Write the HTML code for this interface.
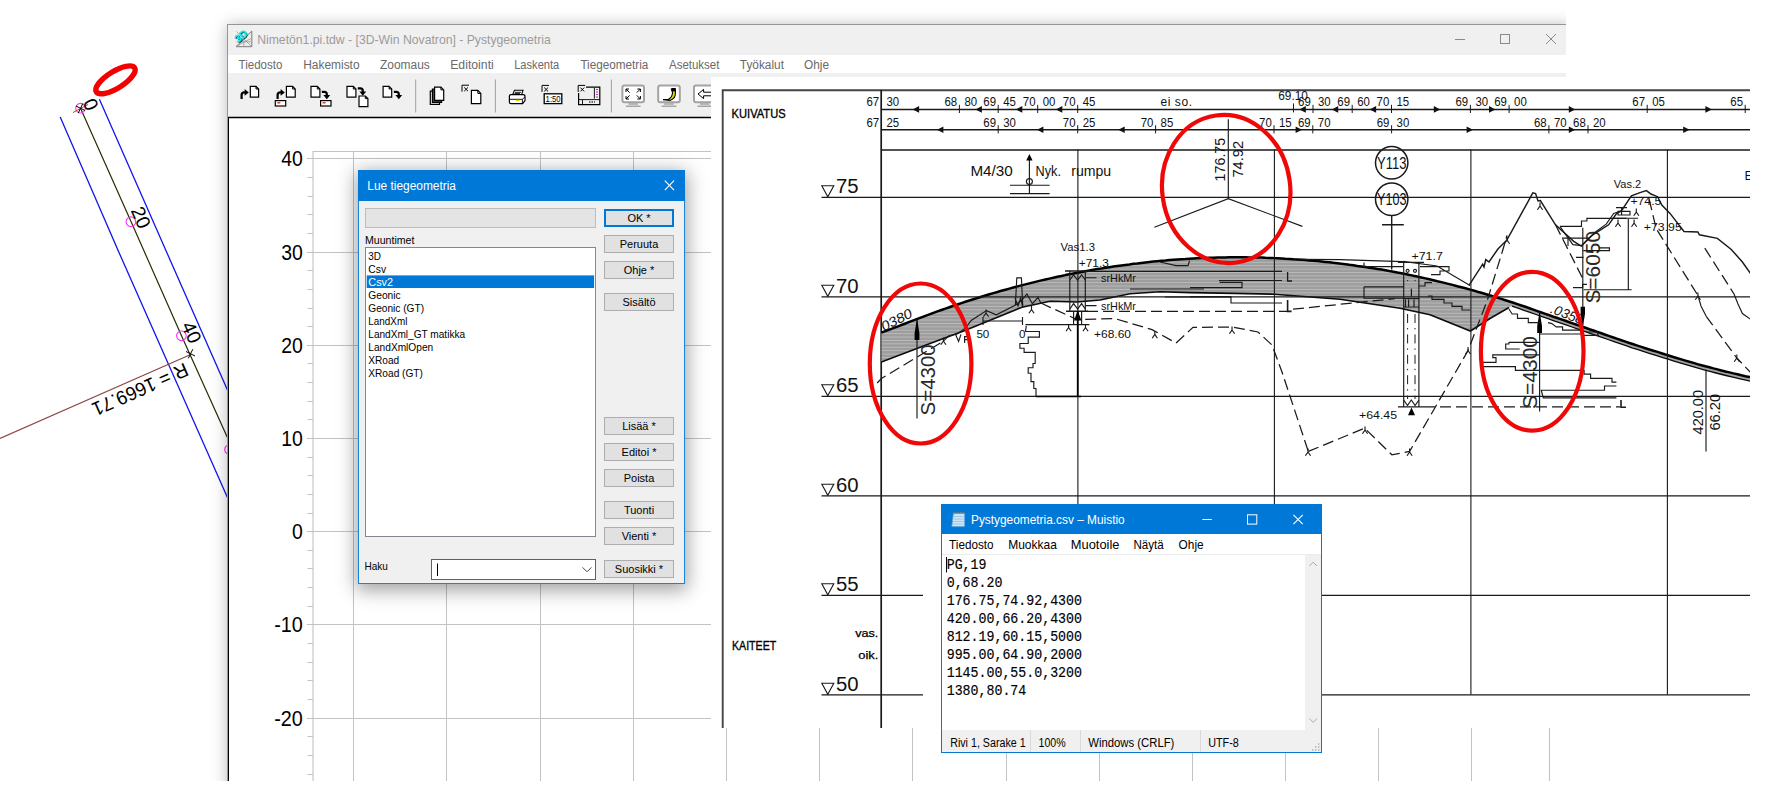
<!DOCTYPE html>
<html lang="fi"><head><meta charset="utf-8"><title>Pystygeometria</title>
<style>
html,body{margin:0;padding:0;background:#fff;}
body{width:1771px;height:791px;position:relative;overflow:hidden;font-family:"Liberation Sans",sans-serif;}
.abs{position:absolute;}
svg{position:absolute;left:0;top:0;overflow:visible;}
svg text{font-family:"Liberation Sans",sans-serif;}
/* main window */
#mainclip{position:absolute;left:0;top:0;width:1566px;height:781px;overflow:hidden;}
#mainwin{position:absolute;left:227px;top:24px;width:1345px;height:780px;background:#fff;border:1px solid #969696;box-sizing:border-box;box-shadow:0 1px 15px 0 rgba(0,0,0,.27);}
#mtitle{position:absolute;left:0;top:0;width:100%;height:30px;background:#f0f0f0;}
#mtitle .t{position:absolute;left:29px;top:0;line-height:30px;font-size:12.4px;color:#9a9a9a;white-space:nowrap;}
#mmenu{position:absolute;left:0;top:30px;width:100%;height:18px;background:#fff;}
#mmenu span{position:absolute;top:0;line-height:19px;font-size:12.3px;color:#686868;white-space:nowrap;}
#mtool{position:absolute;left:0;top:48px;width:100%;height:44px;background:#f0f0f0;}
#mclient{position:absolute;left:0;top:92px;width:100%;height:700px;background:#fff;border-left:1px solid #000;box-sizing:border-box;}
.ylab{position:absolute;width:60px;text-align:right;font-size:20.5px;line-height:24px;color:#000;}
/* dialog */
#dlg{position:absolute;left:358px;top:170px;width:327px;height:414px;background:#f0f0f0;border:1px solid #1883d7;box-sizing:border-box;box-shadow:0 4px 18px 2px rgba(0,0,0,.38);font-size:11px;color:#000;}
#dlg .title{position:absolute;left:0;top:0;width:100%;height:30px;background:#0078d7;color:#fff;font-size:12.2px;line-height:29px;}
#dlg .btn{position:absolute;left:245px;width:70px;height:18px;box-sizing:border-box;border:1px solid #adadad;background:#e1e1e1;text-align:center;line-height:16px;font-size:11px;white-space:nowrap;}
#dlg .list{position:absolute;left:6px;top:76px;width:231px;height:290px;box-sizing:border-box;border:1px solid #828790;background:#fff;}
#dlg .list div{position:absolute;left:1px;width:227px;height:13px;line-height:13px;padding-left:2px;box-sizing:border-box;font-size:10.6px;white-space:nowrap;}
/* notepad */
#np{position:absolute;left:941px;top:504px;width:381px;height:249px;background:#fff;border:1px solid #0078d7;box-sizing:border-box;}
#np .title{position:absolute;left:0;top:0;width:100%;height:29px;background:#0078d7;color:#fff;font-size:12.2px;line-height:29px;}
#np .menu span{position:absolute;top:30px;line-height:20px;font-size:12.2px;color:#000;white-space:nowrap;}
#np .txt{position:absolute;left:5px;top:50px;font-family:"Liberation Mono",monospace;font-size:13.27px;line-height:18.08px;white-space:pre;color:#000;transform-origin:0 0;}
#np .status{position:absolute;left:0;top:225px;width:100%;height:22px;background:#f0f0f0;font-size:12px;}
#np .status span{position:absolute;top:0;line-height:23px;white-space:nowrap;}
#np .status i{position:absolute;top:0;width:1px;height:22px;background:#d7d7d7;}

</style></head>
<body>
<svg id="leftsvg" width="1771" height="791" viewBox="0 0 1771 791">
<g fill="none" stroke-linecap="butt">
<path d="M99.4 99.3 L165.7 250 L229 393.5" stroke="#1414f0" stroke-width="1.3"/>
<path d="M60.2 117 L117.9 250 L229 501" stroke="#1414f0" stroke-width="1.3"/>
<path d="M80.5 108.2 L131 221.5 L181.4 335.5 L229 441" stroke="#2b2b00" stroke-width="1.2"/>
<path d="M0 438.4 L189.6 355" stroke="#8c4646" stroke-width="1.1"/>
<circle cx="80.5" cy="108.2" r="4.8" stroke="#ff2cff" stroke-width="1.1"/>
<circle cx="130.9" cy="221.7" r="4.8" stroke="#ff2cff" stroke-width="1.1"/>
<circle cx="181.4" cy="335.8" r="4.8" stroke="#ff2cff" stroke-width="1.1"/>
<circle cx="229.5" cy="449.5" r="4.8" stroke="#ff2cff" stroke-width="1.1"/>
<path d="M73 112.5 L88 104.5" stroke="#ff2020" stroke-width="1"/>
<path d="M76 106 L85 110.5 M82.8 103.5 L78.3 113" stroke="#000" stroke-width="1"/>
<path d="M186 351.5 L195 356 M192.8 349.2 L188.3 358.4" stroke="#000" stroke-width="1"/>
<ellipse cx="115.5" cy="79.8" rx="22.6" ry="8.4" transform="rotate(-32 115.5 79.8)" stroke="#f40000" stroke-width="5.4"/>
</g>
<g font-size="19.4px" fill="#000" text-anchor="middle">
<text transform="translate(91 104.4) rotate(66)" y="6.9">0</text>
<text transform="translate(141.1 217.4) rotate(66)" y="6.9">20</text>
<text transform="translate(191.7 332.2) rotate(66)" y="6.9">40</text>
<text transform="translate(140.2 389.6) rotate(156.2)" y="6.8" font-size="19.4px" textLength="103" lengthAdjust="spacingAndGlyphs">R = 1669.71</text>
</g>
</svg>
<div id="mainclip"><div id="mainwin">
<div id="mtitle"></div><div id="mmenu"></div><div id="mtool"></div><div id="mclient"></div>
</div>
<svg width="1566" height="781" viewBox="0 0 1566 781">
<path d="M313 151 V781 M312.5 151.5 H1549.5 V781" fill="none" stroke="#c3c3c3" stroke-width="1.1"/><path d="M353.5 151.5 V781 M446.5 151.5 V781 M540.5 151.5 V781 M633.5 151.5 V781 M726.5 151.5 V781 M819.5 151.5 V781 M912.5 151.5 V781 M1006.5 151.5 V781 M1099.5 151.5 V781 M1192.5 151.5 V781 M1285.5 151.5 V781 M1378.5 151.5 V781 M1471.5 151.5 V781 M306.8 158.5 H1549 M306.8 252.5 H1549 M306.8 345.5 H1549 M306.8 438.5 H1549 M306.8 531.5 H1549 M306.8 624.5 H1549 M306.8 718.5 H1549 " fill="none" stroke="#c3c3c3" stroke-width="1"/><path d="M307.4 177.5 H313 M307.4 196.5 H313 M307.4 214.5 H313 M307.4 233.5 H313 M307.4 270.5 H313 M307.4 289.5 H313 M307.4 308.5 H313 M307.4 326.5 H313 M307.4 363.5 H313 M307.4 382.5 H313 M307.4 401.5 H313 M307.4 419.5 H313 M307.4 457.5 H313 M307.4 475.5 H313 M307.4 494.5 H313 M307.4 513.5 H313 M307.4 550.5 H313 M307.4 568.5 H313 M307.4 587.5 H313 M307.4 606.5 H313 M307.4 643.5 H313 M307.4 662.5 H313 M307.4 680.5 H313 M307.4 699.5 H313 M307.4 736.5 H313 M307.4 755.5 H313 M307.4 774.5 H313 " fill="none" stroke="#c3c3c3" stroke-width="1"/><text x="281.2" y="166.4" textLength="21.6" lengthAdjust="spacingAndGlyphs" font-size="21.2px" fill="#000">40</text><text x="281.2" y="259.6" textLength="21.6" lengthAdjust="spacingAndGlyphs" font-size="21.2px" fill="#000">30</text><text x="281.2" y="352.8" textLength="21.6" lengthAdjust="spacingAndGlyphs" font-size="21.2px" fill="#000">20</text><text x="281.2" y="446.0" textLength="21.6" lengthAdjust="spacingAndGlyphs" font-size="21.2px" fill="#000">10</text><text x="292.0" y="539.2" textLength="10.8" lengthAdjust="spacingAndGlyphs" font-size="21.2px" fill="#000">0</text><text x="274.2" y="632.4" textLength="28.6" lengthAdjust="spacingAndGlyphs" font-size="21.2px" fill="#000">-10</text><text x="274.2" y="725.6" textLength="28.6" lengthAdjust="spacingAndGlyphs" font-size="21.2px" fill="#000">-20</text>
<path d="M228 117.4 H1566" stroke="#000" stroke-width="1.5"/><g><path d="M236 46.7 L251.8 31 V46.7 Z" fill="#ececec" stroke="#7a7a7a" stroke-width="1"/><path d="M237.6 45.4 L251 38.6 M238.4 46.4 L245.6 32.6 M236.6 41.8 H251.4 M243.8 36.2 V46.4 M236.4 31.4 L251.6 46.6" stroke="#9a9a9a" stroke-width="0.8"/><text transform="translate(241.9 36.9) rotate(-38)" text-anchor="middle" y="3.4" font-size="10px" font-weight="bold" fill="#000">3D</text><text transform="translate(241.2 36.2) rotate(-38)" text-anchor="middle" y="3.4" font-size="10.6px" font-weight="bold" fill="#10e6ee" stroke="#10e6ee" stroke-width="0.4">3D</text></g><text x="257.2" y="44.2" textLength="293.6" lengthAdjust="spacingAndGlyphs" font-size="12.4px" fill="#9b9b9b" >Nimetön1.pi.tdw - [3D-Win Novatron] - Pystygeometria</text><path d="M1455 39.5 H1465" stroke="#8a8a8a" stroke-width="1"/><rect x="1500.5" y="34.5" width="9" height="9" fill="none" stroke="#8a8a8a" stroke-width="1"/><path d="M1546 34 L1556 44 M1556 34 L1546 44" stroke="#8a8a8a" stroke-width="1"/>
<text x="238.6" y="69" textLength="43.8" lengthAdjust="spacingAndGlyphs" font-size="12.3px" fill="#6a6a6a" >Tiedosto</text><text x="303.2" y="69" textLength="56.4" lengthAdjust="spacingAndGlyphs" font-size="12.3px" fill="#6a6a6a" >Hakemisto</text><text x="380" y="69" textLength="49.8" lengthAdjust="spacingAndGlyphs" font-size="12.3px" fill="#6a6a6a" >Zoomaus</text><text x="450.2" y="69" textLength="43.6" lengthAdjust="spacingAndGlyphs" font-size="12.3px" fill="#6a6a6a" >Editointi</text><text x="514.2" y="69" textLength="45.1" lengthAdjust="spacingAndGlyphs" font-size="12.3px" fill="#6a6a6a" >Laskenta</text><text x="580.4" y="69" textLength="68.0" lengthAdjust="spacingAndGlyphs" font-size="12.3px" fill="#6a6a6a" >Tiegeometria</text><text x="669" y="69" textLength="50.4" lengthAdjust="spacingAndGlyphs" font-size="12.3px" fill="#6a6a6a" >Asetukset</text><text x="739.8" y="69" textLength="44.2" lengthAdjust="spacingAndGlyphs" font-size="12.3px" fill="#6a6a6a" >Työkalut</text><text x="804" y="69" textLength="25" lengthAdjust="spacingAndGlyphs" font-size="12.3px" fill="#6a6a6a" >Ohje</text>
<path d="M415.7 79.5 V112.5" stroke="#a0a0a0" stroke-width="1"/><path d="M495.4 79.5 V112.5" stroke="#a0a0a0" stroke-width="1"/><path d="M611.4 79.5 V112.5" stroke="#a0a0a0" stroke-width="1"/><path d="M241.6 98.9 V94.9 Q241.6 92.4 244.6 92.4 H245.6" fill="none" stroke="#000" stroke-width="2.2"/><path d="M244.6 89.0 L248.79999999999998 92.4 L244.6 95.80000000000001 Z" fill="#000"/><path d="M250.3 86.4 H256.0 L258.6 89.0 V97.10000000000001 H250.3 Z" fill="#fff" stroke="#000" stroke-width="1.2"/><path d="M256.0 86.4 V89.0 H258.6" fill="none" stroke="#000" stroke-width="1"/><path d="M277.6 98.9 V94.9 Q277.6 92.4 280.6 92.4 H281.6" fill="none" stroke="#000" stroke-width="2.2"/><path d="M280.6 89.0 L284.8 92.4 L280.6 95.80000000000001 Z" fill="#000"/><path d="M286.4 86.4 H292.59999999999997 L295.2 89.0 V97.10000000000001 H286.4 Z" fill="#fff" stroke="#000" stroke-width="1.2"/><path d="M292.59999999999997 86.4 V89.0 H295.2" fill="none" stroke="#000" stroke-width="1"/><rect x="275.3" y="100.6" width="10.4" height="5.4" fill="#fff" stroke="#000" stroke-width="1.2"/><path d="M277.3 102.8 H280.3" stroke="#e00000" stroke-width="1.2"/><path d="M311 86.4 H317.29999999999995 L319.9 89.0 V97.10000000000001 H311 Z" fill="#fff" stroke="#000" stroke-width="1.2"/><path d="M317.29999999999995 86.4 V89.0 H319.9" fill="none" stroke="#000" stroke-width="1"/><path d="M321.8 91.8 H324.3 Q326.8 91.8 326.8 94.3 V95.8" fill="none" stroke="#000" stroke-width="2.2"/><path d="M323.40000000000003 95.0 L326.8 99.2 L330.2 95.0 Z" fill="#000"/><rect x="320.6" y="100.6" width="10.4" height="5.4" fill="#fff" stroke="#000" stroke-width="1.2"/><path d="M322.6 102.8 H325.6" stroke="#e00000" stroke-width="1.2"/><path d="M347 86.4 H353.29999999999995 L355.9 89.0 V97.10000000000001 H347 Z" fill="#fff" stroke="#000" stroke-width="1.2"/><path d="M353.29999999999995 86.4 V89.0 H355.9" fill="none" stroke="#000" stroke-width="1"/><path d="M357.8 88.4 H360.3 Q362.8 88.4 362.8 90.9 V92.4" fill="none" stroke="#000" stroke-width="2.2"/><path d="M359.40000000000003 91.60000000000001 L362.8 95.80000000000001 L366.2 91.60000000000001 Z" fill="#000"/><path d="M359 96 H365.29999999999995 L367.9 98.6 V106.6 H359 Z" fill="#fff" stroke="#000" stroke-width="1.2"/><path d="M365.29999999999995 96 V98.6 H367.9" fill="none" stroke="#000" stroke-width="1"/><path d="M383.1 86.4 H389.1 L391.70000000000005 89.0 V97.10000000000001 H383.1 Z" fill="#fff" stroke="#000" stroke-width="1.2"/><path d="M389.1 86.4 V89.0 H391.70000000000005" fill="none" stroke="#000" stroke-width="1"/><path d="M393.8 91.8 H396.3 Q398.8 91.8 398.8 94.3 V95.8" fill="none" stroke="#000" stroke-width="2.2"/><path d="M395.40000000000003 95.0 L398.8 99.2 L402.2 95.0 Z" fill="#000"/><path d="M430.3 91.2 H436.7 L439.5 94.0 V104.4 H430.3 Z" fill="#fff" stroke="#000" stroke-width="1.2"/><path d="M436.7 91.2 V94.0 H439.5" fill="none" stroke="#000" stroke-width="1"/><path d="M432.4 89.2 H438.79999999999995 L441.59999999999997 92.0 V102.4 H432.4 Z" fill="#f00000" stroke="#000" stroke-width="1.2"/><path d="M438.79999999999995 89.2 V92.0 H441.59999999999997" fill="none" stroke="#000" stroke-width="1"/><path d="M434.6 87.1 H440.90000000000003 L443.70000000000005 89.89999999999999 V100.39999999999999 H434.6 Z" fill="#fff" stroke="#000" stroke-width="1.2"/><path d="M440.90000000000003 87.1 V89.89999999999999 H443.70000000000005" fill="none" stroke="#000" stroke-width="1"/><path d="M462 91.7 V85.2 H469" fill="none" stroke="#000" stroke-width="1"/><path d="M464.2 87.4 L468 91.2 M468 87.4 L464.2 91.2" stroke="#000" stroke-width="1"/><path d="M471.4 90.4 H477.79999999999995 L480.79999999999995 93.4 V103.60000000000001 H471.4 Z" fill="#fff" stroke="#000" stroke-width="1.2"/><path d="M477.79999999999995 90.4 V93.4 H480.79999999999995" fill="none" stroke="#000" stroke-width="1"/><path d="M512.5 95 L514.5 90.3 H523 L521.5 95 Z" fill="#fff" stroke="#000" stroke-width="1.1"/><path d="M509.4 96 Q509.4 94.6 511 94.6 H523 Q525 94.6 525 96.4 V100.5 L522.6 103.6 H511 Q509.4 103.6 509.4 102 Z" fill="#fff" stroke="#000" stroke-width="1.2"/><path d="M510 99.3 H522.4 L524.8 97 M522.4 99.3 V103.4 M515 92.3 H521 M514.4 93.6 H520" fill="none" stroke="#000" stroke-width="0.9"/><path d="M516 100.4 H519.5" stroke="#e0d000" stroke-width="1.2"/><path d="M542 91.9 V85.4 H549" fill="none" stroke="#000" stroke-width="1"/><path d="M544.2 87.60000000000001 L548 91.4 M548 87.60000000000001 L544.2 91.4" stroke="#000" stroke-width="1"/><rect x="544.2" y="93.8" width="17.6" height="9.8" fill="#fff" stroke="#000" stroke-width="1.3"/><text x="545.6" y="102.2" font-size="8.6px" textLength="15" lengthAdjust="spacingAndGlyphs" fill="#000">1:50</text><path d="M586 87.2 H599.8 V104.6 H578.6 V93" fill="none" stroke="#000" stroke-width="1.2"/><path d="M578.2 91.9 V85.4 H585.2" fill="none" stroke="#000" stroke-width="1"/><path d="M580.4000000000001 87.60000000000001 L584.2 91.4 M584.2 87.60000000000001 L580.4000000000001 91.4" stroke="#000" stroke-width="1"/><path d="M594.4 88 V98.6 M582.5 99.6 V104.4 M578.8 99.6 H599.6" stroke="#000" stroke-width="0.9" fill="none"/><path d="M596 89.5 h2 M596 92 h2 M596 94.5 h2 M596 97 h2" stroke="#c030c0" stroke-width="1"/><path d="M589 102 h6" stroke="#444" stroke-width="1.6" stroke-dasharray="1.5 1"/><rect x="622.4" y="85.6" width="21.6" height="16.6" rx="2" fill="#fff" stroke="#a3a3a3" stroke-width="2"/><path d="M628.4 104 H638.0 M625.8 106.2 H640.6" stroke="#a6a6a6" stroke-width="1.5"/><path d="M626 89 l3.6 3.6 M626 89 h3 M626 89 v3 M640.4 89 l-3.6 3.6 M640.4 89 h-3 M640.4 89 v3 M626 99 l3.6 -3.6 M626 99 h3 M626 99 v-3 M640.4 99 l-3.6 -3.6 M640.4 99 h-3 M640.4 99 v-3" stroke="#000" stroke-width="1" fill="none"/><rect x="658.2" y="85.6" width="21.6" height="16.6" rx="2" fill="#fff" stroke="#a3a3a3" stroke-width="2"/><path d="M664.2 104 H673.8000000000001 M661.6 106.2 H676.4000000000001" stroke="#a6a6a6" stroke-width="1.5"/><path d="M663 99.6 H668 Q672 98 672.6 92.6 L671.4 89 H675.4 V92 Q676 98.4 670 100.4 Z" fill="#e8e000" stroke="#000" stroke-width="1.1"/><rect x="671.6" y="88" width="4" height="3.4" fill="#000"/><rect x="694" y="85.6" width="21.6" height="16.6" rx="2" fill="#fff" stroke="#a3a3a3" stroke-width="2"/><path d="M700 104 H709.6 M697.4 106.2 H712.2" stroke="#a6a6a6" stroke-width="1.5"/><path d="M698 94 L703.6 89.4 V92.2 H711 M698 94 L703.6 98.6 V95.8 H711" fill="#fff" stroke="#000" stroke-width="1"/>
</svg>
</div>
<div id="dlg"></div>
<svg width="1771" height="791" viewBox="0 0 1771 791"><rect x="358" y="170" width="327" height="31" fill="#0078d7"/><text x="367.3" y="190" textLength="88.7" lengthAdjust="spacingAndGlyphs" font-size="12.3px" fill="#fff" >Lue tiegeometria</text><path d="M664.8 180.6 L674 190.2 M674 180.6 L664.8 190.2" stroke="#fff" stroke-width="1.1"/><rect x="365.5" y="208.5" width="230" height="19" fill="#e4e4e4" stroke="#bdbdbd" stroke-width="1"/><text x="365" y="244.4" textLength="49.4" lengthAdjust="spacingAndGlyphs" font-size="11px" fill="#000" >Muuntimet</text><rect x="365.5" y="247.5" width="230" height="289" fill="#fff" stroke="#828790" stroke-width="1"/><rect x="366.7" y="275.4" width="227.4" height="12.6" fill="#0078d7"/><text x="368.3" y="260.1" textLength="12.7" lengthAdjust="spacingAndGlyphs" font-size="10.8px" fill="#000" >3D</text><text x="368.3" y="273.1" textLength="17.8" lengthAdjust="spacingAndGlyphs" font-size="10.8px" fill="#000" >Csv</text><text x="368.3" y="286.1" textLength="24.8" lengthAdjust="spacingAndGlyphs" font-size="10.8px" fill="#fff" >Csv2</text><text x="368.3" y="299.2" textLength="32.4" lengthAdjust="spacingAndGlyphs" font-size="10.8px" fill="#000" >Geonic</text><text x="368.3" y="312.2" textLength="55.8" lengthAdjust="spacingAndGlyphs" font-size="10.8px" fill="#000" >Geonic (GT)</text><text x="368.3" y="325.2" textLength="39.1" lengthAdjust="spacingAndGlyphs" font-size="10.8px" fill="#000" >LandXml</text><text x="368.3" y="338.2" textLength="96.8" lengthAdjust="spacingAndGlyphs" font-size="10.8px" fill="#000" >LandXml_GT matikka</text><text x="368.3" y="351.2" textLength="64.9" lengthAdjust="spacingAndGlyphs" font-size="10.8px" fill="#000" >LandXmlOpen</text><text x="368.3" y="364.3" textLength="30.9" lengthAdjust="spacingAndGlyphs" font-size="10.8px" fill="#000" >XRoad</text><text x="368.3" y="377.3" textLength="54.6" lengthAdjust="spacingAndGlyphs" font-size="10.8px" fill="#000" >XRoad (GT)</text><rect x="605" y="210" width="68" height="16" fill="#e1e1e1" stroke="#0078d7" stroke-width="2"/><text x="639" y="222" text-anchor="middle" font-size="11px" fill="#000">OK *</text><rect x="604.5" y="235.5" width="69.0" height="17.0" fill="#e1e1e1" stroke="#adadad" stroke-width="1"/><text x="639" y="248" text-anchor="middle" font-size="11px" fill="#000">Peruuta</text><rect x="604.5" y="261.5" width="69.0" height="17.0" fill="#e1e1e1" stroke="#adadad" stroke-width="1"/><text x="639" y="274" text-anchor="middle" font-size="11px" fill="#000">Ohje *</text><rect x="604.5" y="293.5" width="69.0" height="17.0" fill="#e1e1e1" stroke="#adadad" stroke-width="1"/><text x="639" y="306" text-anchor="middle" font-size="11px" fill="#000">Sisältö</text><rect x="604.5" y="417.5" width="69.0" height="17.0" fill="#e1e1e1" stroke="#adadad" stroke-width="1"/><text x="639" y="430" text-anchor="middle" font-size="11px" fill="#000">Lisää *</text><rect x="604.5" y="443.5" width="69.0" height="17.0" fill="#e1e1e1" stroke="#adadad" stroke-width="1"/><text x="639" y="456" text-anchor="middle" font-size="11px" fill="#000">Editoi *</text><rect x="604.5" y="469.5" width="69.0" height="17.0" fill="#e1e1e1" stroke="#adadad" stroke-width="1"/><text x="639" y="482" text-anchor="middle" font-size="11px" fill="#000">Poista</text><rect x="604.5" y="501.5" width="69.0" height="17.0" fill="#e1e1e1" stroke="#adadad" stroke-width="1"/><text x="639" y="514" text-anchor="middle" font-size="11px" fill="#000">Tuonti</text><rect x="604.5" y="527.5" width="69.0" height="17.0" fill="#e1e1e1" stroke="#adadad" stroke-width="1"/><text x="639" y="540" text-anchor="middle" font-size="11px" fill="#000">Vienti *</text><rect x="604.5" y="560.5" width="69.0" height="17.0" fill="#e1e1e1" stroke="#adadad" stroke-width="1"/><text x="639" y="573" text-anchor="middle" font-size="11px" fill="#000">Suosikki *</text><text x="364.5" y="569.6" textLength="23.4" lengthAdjust="spacingAndGlyphs" font-size="11px" fill="#000" >Haku</text><rect x="431.5" y="559.5" width="164" height="20" fill="#fff" stroke="#0078d7" stroke-width="1"/><path d="M437.5 563.5 V576" stroke="#000" stroke-width="1"/><path d="M582.6 567.4 L587 571.8 L591.4 567.4" fill="none" stroke="#444" stroke-width="1"/></svg>
<svg width="1771" height="791" viewBox="0 0 1771 791"><defs><clipPath id="dc"><rect x="711" y="77" width="1039" height="651"/></clipPath><pattern id="hat" width="6" height="3.4" patternUnits="userSpaceOnUse"><rect width="6" height="3.4" fill="#9d9d9d"/><rect y="0" width="6" height="0.9" fill="#bcbcbc"/></pattern></defs><rect x="711" y="77" width="1039" height="651" fill="#fff"/><g clip-path="url(#dc)"><path d="M722.7 728 V90.2 H1750" fill="none" stroke="#444" stroke-width="1.9"/><path d="M881.2 90 V728" stroke="#1a1a1a" stroke-width="1.7"/><path d="M881.4 109.6 H1750 M881.4 129.8 H1750 M881.4 149.9 H1750" stroke="#1a1a1a" stroke-width="1.5" fill="none"/><path d="M821.8 185.8 H833.8 L827.8 196.8 Z" fill="none" stroke="#1a1a1a" stroke-width="1.1"/><text x="836" y="193.0" font-size="20px" textLength="22.6" lengthAdjust="spacingAndGlyphs" fill="#111">75</text><path d="M821.8 285.3 H833.8 L827.8 296.3 Z" fill="none" stroke="#1a1a1a" stroke-width="1.1"/><text x="836" y="292.5" font-size="20px" textLength="22.6" lengthAdjust="spacingAndGlyphs" fill="#111">70</text><path d="M821.8 384.8 H833.8 L827.8 395.8 Z" fill="none" stroke="#1a1a1a" stroke-width="1.1"/><text x="836" y="392.0" font-size="20px" textLength="22.6" lengthAdjust="spacingAndGlyphs" fill="#111">65</text><path d="M821.8 484.3 H833.8 L827.8 495.3 Z" fill="none" stroke="#1a1a1a" stroke-width="1.1"/><text x="836" y="491.5" font-size="20px" textLength="22.6" lengthAdjust="spacingAndGlyphs" fill="#111">60</text><path d="M821.8 583.8 H833.8 L827.8 594.8 Z" fill="none" stroke="#1a1a1a" stroke-width="1.1"/><text x="836" y="591.0" font-size="20px" textLength="22.6" lengthAdjust="spacingAndGlyphs" fill="#111">55</text><path d="M821.8 683.3 H833.8 L827.8 694.3 Z" fill="none" stroke="#1a1a1a" stroke-width="1.1"/><text x="836" y="690.5" font-size="20px" textLength="22.6" lengthAdjust="spacingAndGlyphs" fill="#111">50</text><text x="731.6" y="117.8" font-size="12.6px" textLength="54" lengthAdjust="spacingAndGlyphs" fill="#000" stroke="#000" stroke-width="0.35">KUIVATUS</text><text x="732" y="649.8" font-size="12.6px" textLength="44.2" lengthAdjust="spacingAndGlyphs" fill="#000" stroke="#000" stroke-width="0.35">KAITEET</text><text x="855.2" y="637.4" font-size="11.4px" textLength="23.2" lengthAdjust="spacingAndGlyphs" fill="#000" stroke="#000" stroke-width="0.25">vas.</text><text x="858.2" y="658.6" font-size="11.4px" textLength="20.2" lengthAdjust="spacingAndGlyphs" fill="#000" stroke="#000" stroke-width="0.25">oik.</text><text x="866.5" y="106.10000000000001" textLength="12.7" lengthAdjust="spacingAndGlyphs" font-size="12.4px" fill="#111">67</text><text x="886.4" y="106.10000000000001" textLength="12.7" lengthAdjust="spacingAndGlyphs" font-size="12.4px" fill="#111">30</text><path d="M959.4 104.80000000000001 V113.0" stroke="#1a1a1a" stroke-width="1"/><text x="944.5" y="106.10000000000001" textLength="12.7" lengthAdjust="spacingAndGlyphs" font-size="12.4px" fill="#111">68</text><text x="964.4" y="106.10000000000001" textLength="12.7" lengthAdjust="spacingAndGlyphs" font-size="12.4px" fill="#111">80</text><path d="M998.2 104.80000000000001 V113.0" stroke="#1a1a1a" stroke-width="1"/><text x="983.3" y="106.10000000000001" textLength="12.7" lengthAdjust="spacingAndGlyphs" font-size="12.4px" fill="#111">69</text><text x="1003.2" y="106.10000000000001" textLength="12.7" lengthAdjust="spacingAndGlyphs" font-size="12.4px" fill="#111">45</text><path d="M1037.7 104.80000000000001 V113.0" stroke="#1a1a1a" stroke-width="1"/><text x="1022.8" y="106.10000000000001" textLength="12.7" lengthAdjust="spacingAndGlyphs" font-size="12.4px" fill="#111">70</text><text x="1042.7" y="106.10000000000001" textLength="12.7" lengthAdjust="spacingAndGlyphs" font-size="12.4px" fill="#111">00</text><path d="M1077.7 104.80000000000001 V113.0" stroke="#1a1a1a" stroke-width="1"/><text x="1062.8" y="106.10000000000001" textLength="12.7" lengthAdjust="spacingAndGlyphs" font-size="12.4px" fill="#111">70</text><text x="1082.7" y="106.10000000000001" textLength="12.7" lengthAdjust="spacingAndGlyphs" font-size="12.4px" fill="#111">45</text><path d="M1313 104.80000000000001 V113.0" stroke="#1a1a1a" stroke-width="1"/><text x="1298.1" y="106.10000000000001" textLength="12.7" lengthAdjust="spacingAndGlyphs" font-size="12.4px" fill="#111">69</text><text x="1318" y="106.10000000000001" textLength="12.7" lengthAdjust="spacingAndGlyphs" font-size="12.4px" fill="#111">30</text><path d="M1352.2 104.80000000000001 V113.0" stroke="#1a1a1a" stroke-width="1"/><text x="1337.3" y="106.10000000000001" textLength="12.7" lengthAdjust="spacingAndGlyphs" font-size="12.4px" fill="#111">69</text><text x="1357.2" y="106.10000000000001" textLength="12.7" lengthAdjust="spacingAndGlyphs" font-size="12.4px" fill="#111">60</text><path d="M1391.5 104.80000000000001 V113.0" stroke="#1a1a1a" stroke-width="1"/><text x="1376.6" y="106.10000000000001" textLength="12.7" lengthAdjust="spacingAndGlyphs" font-size="12.4px" fill="#111">70</text><text x="1396.5" y="106.10000000000001" textLength="12.7" lengthAdjust="spacingAndGlyphs" font-size="12.4px" fill="#111">15</text><path d="M1470.4 104.80000000000001 V113.0" stroke="#1a1a1a" stroke-width="1"/><text x="1455.5" y="106.10000000000001" textLength="12.7" lengthAdjust="spacingAndGlyphs" font-size="12.4px" fill="#111">69</text><text x="1475.4" y="106.10000000000001" textLength="12.7" lengthAdjust="spacingAndGlyphs" font-size="12.4px" fill="#111">30</text><path d="M1509.1 104.80000000000001 V113.0" stroke="#1a1a1a" stroke-width="1"/><text x="1494.2" y="106.10000000000001" textLength="12.7" lengthAdjust="spacingAndGlyphs" font-size="12.4px" fill="#111">69</text><text x="1514.1" y="106.10000000000001" textLength="12.7" lengthAdjust="spacingAndGlyphs" font-size="12.4px" fill="#111">00</text><path d="M1647.2 104.80000000000001 V113.0" stroke="#1a1a1a" stroke-width="1"/><text x="1632.3" y="106.10000000000001" textLength="12.7" lengthAdjust="spacingAndGlyphs" font-size="12.4px" fill="#111">67</text><text x="1652.2" y="106.10000000000001" textLength="12.7" lengthAdjust="spacingAndGlyphs" font-size="12.4px" fill="#111">05</text><path d="M1745.2 104.80000000000001 V113.0" stroke="#1a1a1a" stroke-width="1"/><text x="1730.3" y="106.10000000000001" textLength="12.7" lengthAdjust="spacingAndGlyphs" font-size="12.4px" fill="#111">65</text><path d="M1293.5 103.4 V112.4" stroke="#1a1a1a" stroke-width="1"/><text x="1278.3" y="99.6" font-size="12px" textLength="29.6" lengthAdjust="spacingAndGlyphs" fill="#111">69.10</text><text x="1160.5" y="106.2" font-size="12px" fill="#111" textLength="31.5" lengthAdjust="spacing">ei so.</text><path d="M912.7 109.4 L919.1 106.10000000000001 V112.7 Z" fill="#111"/><path d="M975.5 109.4 L981.9 106.10000000000001 V112.7 Z" fill="#111"/><path d="M1015.9 109.4 L1022.3 106.10000000000001 V112.7 Z" fill="#111"/><path d="M1055.9 109.4 L1062.3000000000002 106.10000000000001 V112.7 Z" fill="#111"/><path d="M1299.4 109.4 L1305.8000000000002 106.10000000000001 V112.7 Z" fill="#111"/><path d="M1331.8 109.4 L1338.2 106.10000000000001 V112.7 Z" fill="#111"/><path d="M1369.7 109.4 L1376.1000000000001 106.10000000000001 V112.7 Z" fill="#111"/><path d="M1440.2 109.4 L1433.8 106.10000000000001 V112.7 Z" fill="#111"/><path d="M1495.4 109.4 L1489.0 106.10000000000001 V112.7 Z" fill="#111"/><path d="M1575.2 109.4 L1568.8 106.10000000000001 V112.7 Z" fill="#111"/><path d="M1711.8 109.4 L1705.3999999999999 106.10000000000001 V112.7 Z" fill="#111"/><text x="866.5" y="126.50000000000001" textLength="12.7" lengthAdjust="spacingAndGlyphs" font-size="12.4px" fill="#111">67</text><text x="886.4" y="126.50000000000001" textLength="12.7" lengthAdjust="spacingAndGlyphs" font-size="12.4px" fill="#111">25</text><path d="M998.2 125.20000000000002 V133.4" stroke="#1a1a1a" stroke-width="1"/><text x="983.3" y="126.50000000000001" textLength="12.7" lengthAdjust="spacingAndGlyphs" font-size="12.4px" fill="#111">69</text><text x="1003.2" y="126.50000000000001" textLength="12.7" lengthAdjust="spacingAndGlyphs" font-size="12.4px" fill="#111">30</text><path d="M1077.7 125.20000000000002 V133.4" stroke="#1a1a1a" stroke-width="1"/><text x="1062.8" y="126.50000000000001" textLength="12.7" lengthAdjust="spacingAndGlyphs" font-size="12.4px" fill="#111">70</text><text x="1082.7" y="126.50000000000001" textLength="12.7" lengthAdjust="spacingAndGlyphs" font-size="12.4px" fill="#111">25</text><path d="M1155.6 125.20000000000002 V133.4" stroke="#1a1a1a" stroke-width="1"/><text x="1140.7" y="126.50000000000001" textLength="12.7" lengthAdjust="spacingAndGlyphs" font-size="12.4px" fill="#111">70</text><text x="1160.6" y="126.50000000000001" textLength="12.7" lengthAdjust="spacingAndGlyphs" font-size="12.4px" fill="#111">85</text><path d="M1274 125.20000000000002 V133.4" stroke="#1a1a1a" stroke-width="1"/><text x="1259.1" y="126.50000000000001" textLength="12.7" lengthAdjust="spacingAndGlyphs" font-size="12.4px" fill="#111">70</text><text x="1279" y="126.50000000000001" textLength="12.7" lengthAdjust="spacingAndGlyphs" font-size="12.4px" fill="#111">15</text><path d="M1312.8 125.20000000000002 V133.4" stroke="#1a1a1a" stroke-width="1"/><text x="1297.9" y="126.50000000000001" textLength="12.7" lengthAdjust="spacingAndGlyphs" font-size="12.4px" fill="#111">69</text><text x="1317.8" y="126.50000000000001" textLength="12.7" lengthAdjust="spacingAndGlyphs" font-size="12.4px" fill="#111">70</text><path d="M1391.6 125.20000000000002 V133.4" stroke="#1a1a1a" stroke-width="1"/><text x="1376.7" y="126.50000000000001" textLength="12.7" lengthAdjust="spacingAndGlyphs" font-size="12.4px" fill="#111">69</text><text x="1396.6" y="126.50000000000001" textLength="12.7" lengthAdjust="spacingAndGlyphs" font-size="12.4px" fill="#111">30</text><path d="M1548.9 125.20000000000002 V133.4" stroke="#1a1a1a" stroke-width="1"/><text x="1534.0" y="126.50000000000001" textLength="12.7" lengthAdjust="spacingAndGlyphs" font-size="12.4px" fill="#111">68</text><text x="1553.9" y="126.50000000000001" textLength="12.7" lengthAdjust="spacingAndGlyphs" font-size="12.4px" fill="#111">70</text><path d="M1588 125.20000000000002 V133.4" stroke="#1a1a1a" stroke-width="1"/><text x="1573.1" y="126.50000000000001" textLength="12.7" lengthAdjust="spacingAndGlyphs" font-size="12.4px" fill="#111">68</text><text x="1593" y="126.50000000000001" textLength="12.7" lengthAdjust="spacingAndGlyphs" font-size="12.4px" fill="#111">20</text><path d="M937 129.8 L943.4 126.50000000000001 V133.10000000000002 Z" fill="#111"/><path d="M1037 129.8 L1043.4 126.50000000000001 V133.10000000000002 Z" fill="#111"/><path d="M1118.3 129.8 L1124.7 126.50000000000001 V133.10000000000002 Z" fill="#111"/><path d="M1302 129.8 L1295.6 126.50000000000001 V133.10000000000002 Z" fill="#111"/><path d="M1473 129.8 L1466.6 126.50000000000001 V133.10000000000002 Z" fill="#111"/><path d="M1575.2 129.8 L1568.8 126.50000000000001 V133.10000000000002 Z" fill="#111"/><path d="M1689.6 129.8 L1683.1999999999998 126.50000000000001 V133.10000000000002 Z" fill="#111"/><polygon points="881.4,332.7 885.4,331.2 889.4,329.6 893.4,328.1 897.4,326.6 901.4,325.0 905.4,323.5 909.4,321.9 913.4,320.4 917.4,318.9 921.4,317.3 925.4,315.8 929.4,314.3 933.4,312.9 937.4,311.4 941.4,310.0 945.4,308.6 949.4,307.2 953.4,305.8 957.4,304.5 961.4,303.1 965.4,301.8 969.4,300.5 973.4,299.2 977.4,298.0 981.4,296.7 985.4,295.5 989.4,294.3 993.4,293.1 997.4,292.0 1001.4,290.8 1005.4,289.7 1009.4,288.6 1013.4,287.5 1017.4,286.4 1021.4,285.4 1025.4,284.4 1029.4,283.4 1033.4,282.4 1037.4,281.4 1041.4,280.4 1045.4,279.5 1049.4,278.6 1053.4,277.7 1057.4,276.8 1061.4,276.0 1065.4,275.1 1069.4,274.3 1073.4,273.5 1077.4,272.7 1081.4,272.0 1085.4,271.2 1089.4,270.5 1093.4,269.8 1097.4,269.1 1101.4,268.5 1105.4,267.8 1109.4,267.2 1113.4,266.6 1117.4,266.0 1121.4,265.4 1125.4,264.9 1129.4,264.4 1133.4,263.8 1137.4,263.4 1141.4,262.9 1145.4,262.4 1149.4,262.0 1153.4,261.6 1157.4,261.2 1161.4,260.8 1165.4,260.5 1169.4,260.1 1173.4,259.8 1177.4,259.5 1181.4,259.2 1185.4,259.0 1189.4,258.7 1193.4,258.5 1197.4,258.3 1201.4,258.1 1205.4,257.9 1209.4,257.8 1213.4,257.7 1217.4,257.6 1221.4,257.5 1225.4,257.4 1229.4,257.3 1233.4,257.3 1237.4,257.3 1241.4,257.3 1245.4,257.3 1249.4,257.4 1253.4,257.4 1257.4,257.5 1261.4,257.6 1265.4,257.8 1269.4,257.9 1273.4,258.1 1277.4,258.2 1281.4,258.4 1285.4,258.7 1289.4,258.9 1293.4,259.2 1297.4,259.4 1301.4,259.7 1305.4,260.0 1309.4,260.4 1313.4,260.7 1317.4,261.1 1321.4,261.5 1325.4,261.9 1329.4,262.3 1333.4,262.8 1337.4,263.2 1341.4,263.7 1345.4,264.2 1349.4,264.8 1353.4,265.3 1357.4,265.9 1361.4,266.4 1365.4,267.0 1369.4,267.7 1373.4,268.3 1377.4,269.0 1381.4,269.6 1385.4,270.3 1389.4,271.1 1393.4,271.8 1397.4,272.6 1401.4,273.3 1405.4,274.1 1409.4,274.9 1413.4,275.8 1417.4,276.6 1421.4,277.5 1425.4,278.4 1429.4,279.3 1433.4,280.2 1437.4,281.2 1441.4,282.1 1445.4,283.1 1449.4,284.1 1453.4,285.1 1457.4,286.2 1461.4,287.2 1465.4,288.3 1469.4,289.4 1473.4,290.5 1477.4,291.7 1481.4,292.8 1485.4,294.0 1489.4,295.2 1493.4,296.4 1497.4,297.7 1501.4,298.9 1505.4,300.2 1509.4,301.5 1513.4,302.8 1517.4,304.1 1521.4,305.5 1525.4,306.8 1529.4,308.2 1533.4,309.6 1537.4,311.1 1541.4,312.5 1545.4,313.9 1549.4,315.3 1553.4,316.7 1557.4,318.0 1561.4,319.4 1565.4,320.8 1569.4,322.2 1573.4,323.6 1577.4,325.0 1581.4,326.4 1585.4,327.8 1589.4,329.2 1593.4,330.5 1597.4,331.9 1601.4,333.3 1605.4,334.7 1609.4,336.1 1613.4,337.5 1617.4,338.9 1621.4,340.3 1625.4,341.6 1629.4,343.0 1633.4,344.3 1637.4,345.6 1641.4,346.9 1645.4,348.2 1649.4,349.5 1653.4,350.7 1657.4,351.9 1661.4,353.2 1665.4,354.5 1669.4,355.7 1673.4,357.0 1677.4,358.2 1681.4,359.4 1685.4,360.6 1689.4,361.8 1693.4,362.9 1697.4,364.1 1701.4,365.2 1705.4,366.3 1709.4,367.3 1713.4,368.4 1717.4,369.4 1721.4,370.5 1725.4,371.5 1729.4,372.4 1733.4,373.4 1737.4,374.3 1741.4,375.3 1745.4,376.2 1749.4,377.0 1750,377.2 1751,381.3 1746,380.2 1740,378.8 1734,377.4 1728,376.0 1722,374.5 1716,373.0 1710,371.4 1704,369.8 1698,368.1 1692,366.4 1686,364.7 1680,362.9 1674,361.1 1668,359.2 1662,357.3 1656,355.4 1650,353.6 1644,351.7 1638,349.7 1632,347.8 1626,345.7 1620,343.7 1614,341.6 1608,339.5 1602,337.4 1596,335.3 1590,333.3 1584,331.2 1578,329.1 1572,327.0 1566,324.9 1560,322.8 1554,320.8 1548,318.7 1542,316.6 1536,314.5 1530,312.3 1524,310.3 1518,308.2 1512,306.2 1509,307.5 1490,318.5 1470.4,331 1430,314.8 1400,308.2 1340,299.2 1274,294.2 1235,293.4 1190,292.6 1160,291.8 1130,293.8 1100,300 1077,302 1050,301.2 1022,307.3 964.3,330.7 930,343.5 881.4,362" fill="url(#hat)"/><polygon points="1506,300.4 1512,302.3 1518,304.3 1524,306.4 1530,308.4 1536,310.6 1542,312.7 1548,314.8 1554,316.9 1560,318.9 1566,321.0 1572,323.1 1578,325.2 1584,327.3 1590,329.4 1596,331.4 1602,333.5 1608,335.6 1614,337.7 1620,339.8 1626,341.8 1632,343.9 1638,345.8 1644,347.8 1650,349.7 1656,351.5 1662,353.4 1668,355.3 1674,357.2 1680,359.0 1686,360.8 1692,362.5 1698,364.2 1704,365.9 1710,367.5 1716,369.1 1722,370.6 1728,372.1 1734,373.5 1740,374.9 1746,376.3 1751,381.3 1746,380.2 1740,378.8 1734,377.4 1728,376.0 1722,374.5 1716,373.0 1710,371.4 1704,369.8 1698,368.1 1692,366.4 1686,364.7 1680,362.9 1674,361.1 1668,359.2 1662,357.3 1656,355.4 1650,353.6 1644,351.7 1638,349.7 1632,347.8 1626,345.7 1620,343.7 1614,341.6 1608,339.5 1602,337.4 1596,335.3 1590,333.3 1584,331.2 1578,329.1 1572,327.0 1566,324.9 1560,322.8 1554,320.8 1548,318.7 1542,316.6 1536,314.5 1530,312.3 1524,310.3 1518,308.2 1512,306.2" fill="#a2a2a2"/><polyline points="881.4,362 930,343.5 964.3,330.7 1022,307.3 1050,301.2 1077,302 1100,300 1130,293.8 1160,291.8 1190,292.6 1235,293.4 1274,294.2 1340,299.2 1400,308.2 1430,314.8 1470.4,331 1490,318.5 1509,307.5" fill="none" stroke="#0c0c0c" stroke-width="1.6"/><polyline points="1512,306.2 1518,308.2 1524,310.3 1530,312.3 1536,314.5 1542,316.6 1548,318.7 1554,320.8 1560,322.8 1566,324.9 1572,327.0 1578,329.1 1584,331.2 1590,333.3 1596,335.3 1602,337.4 1608,339.5 1614,341.6 1620,343.7 1626,345.7 1632,347.8 1638,349.7 1644,351.7 1650,353.6 1656,355.4 1662,357.3 1668,359.2 1674,361.1 1680,362.9 1686,364.7 1692,366.4 1698,368.1 1704,369.8 1710,371.4 1716,373.0 1722,374.5 1728,376.0 1734,377.4 1740,378.8 1746,380.2 1751,381.3" fill="none" stroke="#0c0c0c" stroke-width="1.3"/><polyline points="881.4,332.7 885.4,331.2 889.4,329.6 893.4,328.1 897.4,326.6 901.4,325.0 905.4,323.5 909.4,321.9 913.4,320.4 917.4,318.9 921.4,317.3 925.4,315.8 929.4,314.3 933.4,312.9 937.4,311.4 941.4,310.0 945.4,308.6 949.4,307.2 953.4,305.8 957.4,304.5 961.4,303.1 965.4,301.8 969.4,300.5 973.4,299.2 977.4,298.0 981.4,296.7 985.4,295.5 989.4,294.3 993.4,293.1 997.4,292.0 1001.4,290.8 1005.4,289.7 1009.4,288.6 1013.4,287.5 1017.4,286.4 1021.4,285.4 1025.4,284.4 1029.4,283.4 1033.4,282.4 1037.4,281.4 1041.4,280.4 1045.4,279.5 1049.4,278.6 1053.4,277.7 1057.4,276.8 1061.4,276.0 1065.4,275.1 1069.4,274.3 1073.4,273.5 1077.4,272.7 1081.4,272.0 1085.4,271.2 1089.4,270.5 1093.4,269.8 1097.4,269.1 1101.4,268.5 1105.4,267.8 1109.4,267.2 1113.4,266.6 1117.4,266.0 1121.4,265.4 1125.4,264.9 1129.4,264.4 1133.4,263.8 1137.4,263.4 1141.4,262.9 1145.4,262.4 1149.4,262.0 1153.4,261.6 1157.4,261.2 1161.4,260.8 1165.4,260.5 1169.4,260.1 1173.4,259.8 1177.4,259.5 1181.4,259.2 1185.4,259.0 1189.4,258.7 1193.4,258.5 1197.4,258.3 1201.4,258.1 1205.4,257.9 1209.4,257.8 1213.4,257.7 1217.4,257.6 1221.4,257.5 1225.4,257.4 1229.4,257.3 1233.4,257.3 1237.4,257.3 1241.4,257.3 1245.4,257.3 1249.4,257.4 1253.4,257.4 1257.4,257.5 1261.4,257.6 1265.4,257.8 1269.4,257.9 1273.4,258.1 1277.4,258.2 1281.4,258.4 1285.4,258.7 1289.4,258.9 1293.4,259.2 1297.4,259.4 1301.4,259.7 1305.4,260.0 1309.4,260.4 1313.4,260.7 1317.4,261.1 1321.4,261.5 1325.4,261.9 1329.4,262.3 1333.4,262.8 1337.4,263.2 1341.4,263.7 1345.4,264.2 1349.4,264.8 1353.4,265.3 1357.4,265.9 1361.4,266.4 1365.4,267.0 1369.4,267.7 1373.4,268.3 1377.4,269.0 1381.4,269.6 1385.4,270.3 1389.4,271.1 1393.4,271.8 1397.4,272.6 1401.4,273.3 1405.4,274.1 1409.4,274.9 1413.4,275.8 1417.4,276.6 1421.4,277.5 1425.4,278.4 1429.4,279.3 1433.4,280.2 1437.4,281.2 1441.4,282.1 1445.4,283.1 1449.4,284.1 1453.4,285.1 1457.4,286.2 1461.4,287.2 1465.4,288.3 1469.4,289.4 1473.4,290.5 1477.4,291.7 1481.4,292.8 1485.4,294.0 1489.4,295.2 1493.4,296.4 1497.4,297.7 1501.4,298.9 1505.4,300.2 1509.4,301.5 1513.4,302.8 1517.4,304.1 1521.4,305.5 1525.4,306.8 1529.4,308.2 1533.4,309.6 1537.4,311.1 1541.4,312.5 1545.4,313.9 1549.4,315.3 1553.4,316.7 1557.4,318.0 1561.4,319.4 1565.4,320.8 1569.4,322.2 1573.4,323.6 1577.4,325.0 1581.4,326.4 1585.4,327.8 1589.4,329.2 1593.4,330.5 1597.4,331.9 1601.4,333.3 1605.4,334.7 1609.4,336.1 1613.4,337.5 1617.4,338.9 1621.4,340.3 1625.4,341.6 1629.4,343.0 1633.4,344.3 1637.4,345.6 1641.4,346.9 1645.4,348.2 1649.4,349.5 1653.4,350.7 1657.4,351.9 1661.4,353.2 1665.4,354.5 1669.4,355.7 1673.4,357.0 1677.4,358.2 1681.4,359.4 1685.4,360.6 1689.4,361.8 1693.4,362.9 1697.4,364.1 1701.4,365.2 1705.4,366.3 1709.4,367.3 1713.4,368.4 1717.4,369.4 1721.4,370.5 1725.4,371.5 1729.4,372.4 1733.4,373.4 1737.4,374.3 1741.4,375.3 1745.4,376.2 1749.4,377.0 1750,377.2" fill="none" stroke="#000" stroke-width="2.5" stroke-linejoin="round"/><path d="M821.5 197.4 H1750 M821.5 296.9 H1750 M821.5 396.4 H1750 M821.5 495.9 H1750 M821.5 595.4 H1750 M821.5 694.9 H1750 " stroke="#1a1a1a" stroke-width="1.1" fill="none"/><path d="M1077.9 149.5 V694.6 M1274.4 149.5 V694.6 M1470.9 149.5 V694.6 M1667.4 149.5 V694.6 " stroke="#1a1a1a" stroke-width="1.1" fill="none"/><path d="M877.2 383 L881.4 378.5 L943.4 341.2" fill="none" stroke="#1a1a1a" stroke-width="1.25" stroke-dasharray="11 5"/><path d="M943.4 341.2 L949 335.7 L957 334 L965.7 327.9 L971.2 320.4 L986.5 310.6 L996.3 314.8 L1015.7 305 L1022 300 L1026.9 294 L1032.4 303.7 L1038 297.6 L1040.8 303" fill="none" stroke="#1a1a1a" stroke-width="1.15"/><path d="M1040.8 303 L1076.9 319.5 L1115 318.6 L1152 329.6 L1176 343 L1193 327.4 L1232 327 L1258 332 L1272 345 L1282 372 L1308.3 451.4" fill="none" stroke="#1a1a1a" stroke-width="1.25" stroke-dasharray="11 5"/><path d="M1308.3 451.4 L1364.6 428.2 L1391.9 454.8 L1409.6 451.4 L1468.1 350.5 L1487.4 300 L1502.8 250 L1507 235.4" fill="none" stroke="#1a1a1a" stroke-width="1.25" stroke-dasharray="11 5"/><path d="M1087 311.4 H1287" fill="none" stroke="#1a1a1a" stroke-width="1.25" stroke-dasharray="11 5"/><path d="M1293 309.2 L1395 298.6" fill="none" stroke="#1a1a1a" stroke-width="1.25" stroke-dasharray="11 5"/><path d="M1287.6 300 V311.4 H1291.6" fill="none" stroke="#1a1a1a" stroke-width="1.6"/><path d="M1287.6 272 V281 H1292" fill="none" stroke="#1a1a1a" stroke-width="1.3"/><path d="M1089 271.4 H1282 M1219 280.5 H1282 M1190 287.6 H1242 V282.4 H1219.6 M1190 296.6 H1231 V303 H1282" fill="none" stroke="#1a1a1a" stroke-width="1.15"/><path d="M1130 289 H1204 M1165 297 H1231" fill="none" stroke="#1a1a1a" stroke-width="1.15"/><path d="M1160 262 L1176 265.6 H1188 L1189.6 260.6" fill="none" stroke="#1a1a1a" stroke-width="1.15"/><path d="M1065 271 H1089 M1066 311.2 H1088" stroke="#1a1a1a" stroke-width="1.5" fill="none"/><path d="M1069.8 271 V311 M1085.3 271 V311" fill="none" stroke="#1a1a1a" stroke-width="1.15"/><path d="M1069.8 280 L1073.6 275 L1077.6 280 L1081.6 275 L1085.3 280 M1069.8 309 L1073.6 303.6 L1077.6 309 L1081.6 303.6 L1085.3 309" fill="none" stroke="#1a1a1a" stroke-width="1.15"/><path d="M1085.3 277.7 H1096.5 M1085.3 305.6 H1096.5" fill="none" stroke="#1a1a1a" stroke-width="1.15"/><path d="M1073.6 311 V325 M1081.6 311 V325 M1025.4 324.6 H1089.4" fill="none" stroke="#1a1a1a" stroke-width="1.15"/><path d="M1077.7 310.5 L1081.4 320.6 H1074 Z" fill="#000"/><path d="M1077.7 311 V396.5 M1036 396.5 H1081" stroke="#000" stroke-width="1.7" fill="none"/><text x="1101" y="281.6" font-size="10.4px" textLength="35" lengthAdjust="spacingAndGlyphs" fill="#111">srHkMr</text><text x="1101" y="309.6" font-size="10.4px" textLength="35" lengthAdjust="spacingAndGlyphs" fill="#111">srHkMr</text><text x="1060.6" y="251.4" font-size="11.4px" textLength="34.4" lengthAdjust="spacingAndGlyphs" fill="#111">Vas1.3</text><text x="1078.8" y="267" font-size="11.4px" textLength="30" lengthAdjust="spacingAndGlyphs" fill="#111">+71.3</text><text x="1094" y="337.8" font-size="11.6px" textLength="37" lengthAdjust="spacingAndGlyphs" fill="#111">+68.60</text><text x="976.4" y="337.8" font-size="11.6px" fill="#111">50</text><text x="1019" y="337.8" font-size="11.6px" fill="#111">0</text><path d="M983 321 H1022.5 M983 317 V325 M1022.5 317 V325" fill="none" stroke="#1a1a1a" stroke-width="1.15"/><path d="M955.6 334.4 L958.6 341.4 L961 334.4 M964.6 343 V336.6 H968 M964.6 339.6 H967" fill="none" stroke="#1a1a1a" stroke-width="1.15"/><path d="M1015.4 305 L1016.8 277.8 H1021.4 L1022.8 307 M1015 298 L1018 306 L1020.6 298 L1022.8 307" fill="none" stroke="#1a1a1a" stroke-width="1.15"/><path d="M1026.3 325.9 L1025.5 331.5 H1039.4 V337.1 H1028.2 V343.5 H1019.9 V348.2 H1024.1 V352.4 H1035.2 V363.5 H1033 V367.7 H1028.2 V373.2 H1031 V381.6 H1033.8 V388.5 H1036 V396" fill="none" stroke="#1a1a1a" stroke-width="1.15"/><path d="M943.4 337.5 L943.4 341 L940.8 344.8 M943.4 341 L946.0 344.8" fill="none" stroke="#1a1a1a" stroke-width="1.15"/><path d="M986 309.5 L986 313 L983.4 316.8 M986 313 L988.6 316.8" fill="none" stroke="#1a1a1a" stroke-width="1.15"/><path d="M1031.5 306.0 L1031.5 309.5 L1028.9 313.3 M1031.5 309.5 L1034.1 313.3" fill="none" stroke="#1a1a1a" stroke-width="1.15"/><path d="M1068.6 324.0 L1068.6 327.5 L1066.0 331.3 M1068.6 327.5 L1071.1999999999998 331.3" fill="none" stroke="#1a1a1a" stroke-width="1.15"/><path d="M1085.5 324.0 L1085.5 327.5 L1082.9 331.3 M1085.5 327.5 L1088.1 331.3" fill="none" stroke="#1a1a1a" stroke-width="1.15"/><path d="M1154.8 330.9 L1154.8 334.4 L1152.2 338.2 M1154.8 334.4 L1157.3999999999999 338.2" fill="none" stroke="#1a1a1a" stroke-width="1.15"/><path d="M1232 326.5 L1232 330 L1229.4 333.8 M1232 330 L1234.6 333.8" fill="none" stroke="#1a1a1a" stroke-width="1.15"/><path d="M1308 448.5 L1308 452 L1305.4 455.8 M1308 452 L1310.6 455.8" fill="none" stroke="#1a1a1a" stroke-width="1.15"/><path d="M1365 426.5 L1365 430 L1362.4 433.8 M1365 430 L1367.6 433.8" fill="none" stroke="#1a1a1a" stroke-width="1.15"/><path d="M1409.6 448.5 L1409.6 452 L1407.0 455.8 M1409.6 452 L1412.1999999999998 455.8" fill="none" stroke="#1a1a1a" stroke-width="1.15"/><path d="M1468 347.0 L1468 350.5 L1465.4 354.3 M1468 350.5 L1470.6 354.3" fill="none" stroke="#1a1a1a" stroke-width="1.15"/><path d="M1540 202.5 L1540 206 L1537.4 209.8 M1540 206 L1542.6 209.8" fill="none" stroke="#1a1a1a" stroke-width="1.15"/><path d="M1507 236.5 L1507 240 L1504.4 243.8 M1507 240 L1509.6 243.8" fill="none" stroke="#1a1a1a" stroke-width="1.15"/><path d="M1403.7 263 V406.8 M1418.9 263 V406.8 M1398 262.4 H1424 M1398 406.8 H1424" fill="none" stroke="#1a1a1a" stroke-width="1.15"/><path d="M1407.6 314 V399 M1415 314 V399" fill="none" stroke="#1a1a1a" stroke-width="1" stroke-dasharray="9 5 1.4 5"/><path d="M1403.7 400 L1407.5 405.6 L1411.3 400 L1415.1 405.6 L1418.9 400" fill="none" stroke="#1a1a1a" stroke-width="1.15"/><path d="M1411.5 407.6 L1415 415.2 H1408 Z" fill="#000"/><circle cx="1407.6" cy="270.8" r="1.5" fill="none" stroke="#1a1a1a" stroke-width="1.15"/><circle cx="1415" cy="270.8" r="1.5" fill="none" stroke="#1a1a1a" stroke-width="1.15"/><path d="M1407.6 280.6 h0.1 M1415 280.6 h0.1 M1411.4 289 V296 M1405.5 300 V307 M1408.6 300 V307 M1414 300 V307 M1403.7 298.6 H1418.8 M1403.7 307 H1418.8" stroke="#1a1a1a" stroke-width="1.2" stroke-linecap="round" fill="none"/><path d="M1424 406.8 H1620" fill="none" stroke="#1a1a1a" stroke-width="1.25" stroke-dasharray="11 5"/><path d="M1621 400 V407.2 H1626" fill="none" stroke="#1a1a1a" stroke-width="1.6"/><text x="1359" y="418.6" font-size="11.6px" textLength="38" lengthAdjust="spacingAndGlyphs" fill="#111">+64.45</text><text x="1411.4" y="259.6" font-size="11.6px" textLength="31.4" lengthAdjust="spacingAndGlyphs" fill="#111">+71.7</text><path d="M1300 259.4 L1340 259.6 L1403 261.6 M1364 262.4 V266.6 H1403 M1403 261.4 L1437 266 L1470 285.6 M1420 266.6 H1449 V271 H1440 V274.6 H1431" fill="none" stroke="#1a1a1a" stroke-width="1.15"/><path d="M1364 286.8 H1403.7 M1364 286.8 V298.2 H1403.7 M1418.8 286 H1425 V282.6 H1432" fill="none" stroke="#1a1a1a" stroke-width="1.15"/><path d="M1428 296 H1432 V299.4 H1444 V303 H1452 V306.4 H1462 V310 H1470" fill="none" stroke="#1a1a1a" stroke-width="1.15"/><circle cx="1391.7" cy="162.8" r="16.2" fill="none" stroke="#1a1a1a" stroke-width="1.5"/><circle cx="1391.7" cy="199.3" r="16.2" fill="none" stroke="#1a1a1a" stroke-width="1.5"/><path d="M1391.7 215.6 V269.6 M1382 224.7 H1403.8" fill="none" stroke="#1a1a1a" stroke-width="1.4"/><text x="1377" y="168.8" font-size="16.4px" textLength="29.4" lengthAdjust="spacingAndGlyphs" fill="#111">Y113</text><text x="1377" y="205.3" font-size="16.4px" textLength="29.4" lengthAdjust="spacingAndGlyphs" fill="#111">Y103</text><text x="970.4" y="175.6" font-size="14.8px" textLength="42.4" lengthAdjust="spacingAndGlyphs" fill="#111">M4/30</text><text x="1035.6" y="175.6" font-size="14.8px" textLength="25.4" lengthAdjust="spacingAndGlyphs" fill="#111">Nyk.</text><text x="1071.2" y="175.6" font-size="14.8px" textLength="40" lengthAdjust="spacingAndGlyphs" fill="#111">rumpu</text><path d="M1029.4 158 V193.6 M1010 185.2 H1049.6 M1010 193.6 H1049.6" fill="none" stroke="#1a1a1a" stroke-width="1.15"/><circle cx="1029.4" cy="181.6" r="3" fill="none" stroke="#1a1a1a" stroke-width="1.15"/><path d="M1029.4 154 L1032.6 160.4 H1026.2 Z" fill="#000"/><path d="M1228.3 119.2 V198.4 M1154.4 227.2 L1228.3 198.6 L1302.4 226.4" fill="none" stroke="#1a1a1a" stroke-width="1.15"/><text transform="translate(1225.2 181.4) rotate(-90)" font-size="14.6px" textLength="43.6" lengthAdjust="spacingAndGlyphs" fill="#111">176.75</text><text transform="translate(1243.2 177.6) rotate(-90)" font-size="14.6px" textLength="36.8" lengthAdjust="spacingAndGlyphs" fill="#111">74.92</text><path d="M1706 369.6 V451.5" fill="none" stroke="#1a1a1a" stroke-width="1.15"/><text transform="translate(1702.8 434.4) rotate(-90)" font-size="14.6px" textLength="44.4" lengthAdjust="spacingAndGlyphs" fill="#111">420.00</text><text transform="translate(1720.2 430.6) rotate(-90)" font-size="14.6px" textLength="36.8" lengthAdjust="spacingAndGlyphs" fill="#111">66.20</text><path d="M917 319 V418.5" fill="none" stroke="#1a1a1a" stroke-width="1.15"/><path d="M917 318.6 L919.4 333 V340 H914.6 V333 Z" fill="#000"/><text transform="translate(935 415.4) rotate(-90)" font-size="20.6px" textLength="71" lengthAdjust="spacingAndGlyphs" fill="#2a2a2a">S=4300</text><text transform="translate(884 331.6) rotate(-27)" font-size="13.6px" font-style="italic" textLength="33" lengthAdjust="spacingAndGlyphs" fill="#111">0380</text><path d="M1539.6 311.7 V411.5" fill="none" stroke="#1a1a1a" stroke-width="1.15"/><path d="M1539.6 311.4 L1542 326 V333 H1537.2 V326 Z" fill="#000"/><text transform="translate(1536.6 409) rotate(-90)" font-size="20.6px" textLength="73" lengthAdjust="spacingAndGlyphs" fill="#2a2a2a">S=4300</text><text transform="translate(1549.6 312.4) rotate(21)" font-size="13.6px" font-style="italic" textLength="34" lengthAdjust="spacingAndGlyphs" fill="#111">.0358</text><path d="M1582.8 227.8 V326" fill="none" stroke="#1a1a1a" stroke-width="1.15"/><path d="M1580.6 306.8 H1585 V314 L1582.8 326.4 L1580.6 314 Z" fill="#000"/><text transform="translate(1600.4 303.6) rotate(-90)" font-size="20.6px" textLength="72.6" lengthAdjust="spacingAndGlyphs" fill="#2a2a2a">S=6050</text><path d="M1508.9 309 L1512.1 314 H1517.5 V318.3 H1528.3 V322.6 H1540 M1548 322.6 L1551.9 323.6 L1556.2 326.9 H1562.6 V330.1 H1582 M1586 332 H1597 L1598.4 335.4 H1584" fill="none" stroke="#1a1a1a" stroke-width="1.15"/><path d="M1539.4 334 H1582 M1508.9 342.3 H1539 M1519.7 349 H1505.7 V344 H1508.9 V342.3 M1483.1 362.3 H1496 V357.6 H1492.8 V354.8 H1539.4 M1483.1 366.6 H1515.4 V370.3 H1584.1 V374.1 H1590.6 V378.4 H1612 V382.1 H1616.4 M1616.4 386 H1604.5 V390.2 H1541.2 L1543.3 397.8 H1616.4" fill="none" stroke="#1a1a1a" stroke-width="1.15"/><path d="M1560 226.3 H1581.5 V221 H1586.9 V218.3 H1626.6 M1562 238.1 H1589 M1568 238.1 V246 M1598.7 247.8 H1609.4 V250.6 H1583.2 M1576 257.4 H1583.6 M1573 287.6 H1582.6 V284.4 H1587 M1583.6 289.7 H1631.6 M1628.3 218.8 V289.7" fill="none" stroke="#1a1a1a" stroke-width="1.15"/><path d="M1616 207.6 H1627 M1621.6 207.6 V215 M1618 211.4 H1630 V215 H1618 Z M1612 218.2 H1638" fill="none" stroke="#1a1a1a" stroke-width="1.15"/><path d="M1469 285.4 L1482.7 264.2 L1484 267 L1485.8 259.6 L1489 262 L1497.9 249 L1507 239.9 L1532.8 192.9 L1535.6 193.6 L1538 201 L1540.4 200.5 L1555.5 224.8 L1573.7 241.4 L1581.3 246 L1592 235.4 L1608.6 224.8 L1616.2 214 L1622 210 L1631.4 195.9 L1640 192.6 L1646.4 190.6 L1651 194 L1657.6 196.7 L1661.8 205 L1670 213.4 L1684 231.5 L1697.9 232 L1699.4 234.8 L1717.4 238.4 L1731.3 249.5 L1742.4 262 L1750.4 273.4" fill="none" stroke="#1a1a1a" stroke-width="1.45"/><path d="M1555.5 224.8 L1583 279 M1649.2 199.5 L1656.2 228.7 L1697.9 295.4 M1706.2 316.3 L1736.8 358 L1751 373 M1704.8 248.2 L1734 294" fill="none" stroke="#1a1a1a" stroke-width="1.25" stroke-dasharray="11 5"/><path d="M1697.9 295.4 L1701 306 L1706.2 316.3 M1734 294 L1738 304 L1742.4 313.5 L1751 319.6" fill="none" stroke="#1a1a1a" stroke-width="1.15"/><path d="M1560 226.3 L1564.3 232.7 L1572.9 244.6 L1581.5 245.6 L1594.4 232.7 L1606.2 224.1 L1613.7 213.4 L1617 212.3 L1624.5 211.2" fill="none" stroke="#1a1a1a" stroke-width="1.15"/><path d="M1697.9 292.5 L1697.9 296 L1695.3000000000002 299.8 M1697.9 296 L1700.5 299.8" fill="none" stroke="#1a1a1a" stroke-width="1.15"/><path d="M1736.8 354.5 L1736.8 358 L1734.2 361.8 M1736.8 358 L1739.3999999999999 361.8" fill="none" stroke="#1a1a1a" stroke-width="1.15"/><path d="M1618 219.5 L1618 223 L1615.4 226.8 M1618 223 L1620.6 226.8" fill="none" stroke="#1a1a1a" stroke-width="1.15"/><path d="M1634.1 219.5 L1634.1 223 L1631.5 226.8 M1634.1 223 L1636.6999999999998 226.8" fill="none" stroke="#1a1a1a" stroke-width="1.15"/><path d="M1636.3 208.5 L1636.3 212 L1633.7 215.8 M1636.3 212 L1638.8999999999999 215.8" fill="none" stroke="#1a1a1a" stroke-width="1.15"/><text x="1613.8" y="187.8" font-size="11.4px" textLength="27.4" lengthAdjust="spacingAndGlyphs" fill="#111">Vas.2</text><text x="1630.4" y="204.6" font-size="11.6px" textLength="31" lengthAdjust="spacingAndGlyphs" fill="#111">+74.5</text><text x="1643.8" y="231.4" font-size="11.6px" textLength="38" lengthAdjust="spacingAndGlyphs" fill="#111">+73.95</text><text x="1744.6" y="180.4" font-size="12.6px" fill="#111">E</text><ellipse cx="920.6" cy="363.5" rx="50.8" ry="80" fill="none" stroke="#f00808" stroke-width="4.2"/><ellipse cx="1226.2" cy="189" rx="64" ry="74.2" fill="none" stroke="#f00808" stroke-width="4.2" transform="rotate(-8 1226.2 189)"/><ellipse cx="1532.2" cy="351.2" rx="51.3" ry="79.4" fill="none" stroke="#f00808" stroke-width="4.2"/></g></svg>
<div class="abs" style="left:923px;top:504px;width:20px;height:249px;background:#fff"></div><div id="np"></div>
<svg width="1771" height="791" viewBox="0 0 1771 791"><rect x="941" y="504" width="381" height="30" fill="#0078d7"/><g><path d="M953.4 513.6 H964.6 V526.6 H951.8 Z" fill="#cfe6f7" stroke="#5aa0d0" stroke-width="0.8"/><path d="M954 516.5 H963.6 M953.6 519 H963.6 M953.2 521.5 H963.6 M952.8 524 H963.6" stroke="#8fbfe0" stroke-width="0.8"/><path d="M953.4 513 H964.6" stroke="#8a8a8a" stroke-width="1.6" stroke-dasharray="1.2 1"/></g><text x="971" y="524.2" textLength="153.7" lengthAdjust="spacingAndGlyphs" font-size="12.2px" fill="#fff" >Pystygeometria.csv – Muistio</text><path d="M1202.3 519.5 H1211.8" stroke="#fff" stroke-width="1"/><rect x="1247.5" y="514.8" width="9.3" height="9.3" fill="none" stroke="#fff" stroke-width="1"/><path d="M1293.4 514.8 L1302.8 524.2 M1302.8 514.8 L1293.4 524.2" stroke="#fff" stroke-width="1.1"/><text x="949.1" y="549.1" textLength="44.5" lengthAdjust="spacingAndGlyphs" font-size="12.2px" fill="#000" >Tiedosto</text><text x="1008.2" y="549.1" textLength="48.7" lengthAdjust="spacingAndGlyphs" font-size="12.2px" fill="#000" >Muokkaa</text><text x="1070.8" y="549.1" textLength="48.7" lengthAdjust="spacingAndGlyphs" font-size="12.2px" fill="#000" >Muotoile</text><text x="1133.4" y="549.1" textLength="30.3" lengthAdjust="spacingAndGlyphs" font-size="12.2px" fill="#000" >Näytä</text><text x="1178.6" y="549.1" textLength="25.0" lengthAdjust="spacingAndGlyphs" font-size="12.2px" fill="#000" >Ohje</text><path d="M942 554.5 H1321" stroke="#ececec" stroke-width="1"/><rect x="1305" y="555" width="16" height="175" fill="#f0f0f0"/><path d="M1309.4 566 L1313.2 562.2 L1317 566 M1309.4 718.6 L1313.2 722.4 L1317 718.6" fill="none" stroke="#a8a8a8" stroke-width="1"/><rect x="942" y="730" width="379" height="22" fill="#f0f0f0"/><path d="M1030.5 730 V752 M1080.5 730 V752 M1200.5 730 V752" stroke="#d9d9d9" stroke-width="1"/><text x="950.2" y="746.8" textLength="75.4" lengthAdjust="spacingAndGlyphs" font-size="12px" fill="#000" >Rivi 1, Sarake 1</text><text x="1038.5" y="746.8" textLength="27.1" lengthAdjust="spacingAndGlyphs" font-size="12px" fill="#000" >100%</text><text x="1088.2" y="746.8" textLength="86.2" lengthAdjust="spacingAndGlyphs" font-size="12px" fill="#000" >Windows (CRLF)</text><text x="1208.2" y="746.8" textLength="30.6" lengthAdjust="spacingAndGlyphs" font-size="12px" fill="#000" >UTF-8</text><path d="M1318 750 h1.4 M1315 750 h1.4 M1312 750 h1.4 M1318 747 h1.4 M1315 747 h1.4 M1318 744 h1.4" stroke="#b0b0b0" stroke-width="1.4"/><text x="946.7" y="569.0" textLength="39.8" lengthAdjust="spacingAndGlyphs" font-size="14.2px" fill="#000" stroke="#000" stroke-width="0.16" style="font-family:'Liberation Mono',monospace">PG,19</text><text x="946.7" y="587.0" textLength="55.7" lengthAdjust="spacingAndGlyphs" font-size="14.2px" fill="#000" stroke="#000" stroke-width="0.16" style="font-family:'Liberation Mono',monospace">0,68.20</text><text x="946.7" y="605.1" textLength="135.3" lengthAdjust="spacingAndGlyphs" font-size="14.2px" fill="#000" stroke="#000" stroke-width="0.16" style="font-family:'Liberation Mono',monospace">176.75,74.92,4300</text><text x="946.7" y="623.1" textLength="135.3" lengthAdjust="spacingAndGlyphs" font-size="14.2px" fill="#000" stroke="#000" stroke-width="0.16" style="font-family:'Liberation Mono',monospace">420.00,66.20,4300</text><text x="946.7" y="641.2" textLength="135.3" lengthAdjust="spacingAndGlyphs" font-size="14.2px" fill="#000" stroke="#000" stroke-width="0.16" style="font-family:'Liberation Mono',monospace">812.19,60.15,5000</text><text x="946.7" y="659.2" textLength="135.3" lengthAdjust="spacingAndGlyphs" font-size="14.2px" fill="#000" stroke="#000" stroke-width="0.16" style="font-family:'Liberation Mono',monospace">995.00,64.90,2000</text><text x="946.7" y="677.2" textLength="135.3" lengthAdjust="spacingAndGlyphs" font-size="14.2px" fill="#000" stroke="#000" stroke-width="0.16" style="font-family:'Liberation Mono',monospace">1145.00,55.0,3200</text><text x="946.7" y="695.3" textLength="79.6" lengthAdjust="spacingAndGlyphs" font-size="14.2px" fill="#000" stroke="#000" stroke-width="0.16" style="font-family:'Liberation Mono',monospace">1380,80.74</text><path d="M946.5 557 V572.5" stroke="#000" stroke-width="1"/></svg>
</body></html>
